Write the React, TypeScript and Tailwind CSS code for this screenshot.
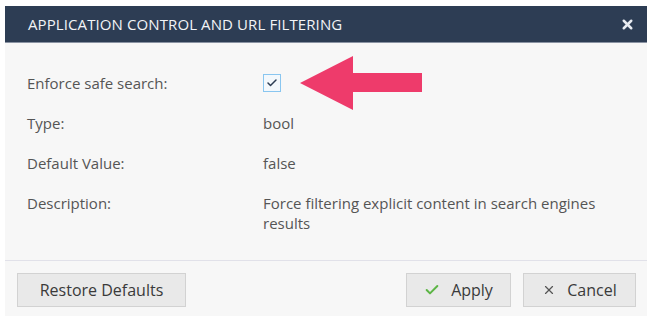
import { Check, X } from 'lucide-react';

const rows = [
  { label: 'Type:', value: 'bool' },
  { label: 'Default Value:', value: 'false' },
  { label: 'Description:', value: 'Force filtering explicit content in search engines results' },
];

function Arrow() {
  return (
    <svg width="124" height="56" viewBox="0 0 124 56" className="absolute left-[37px] top-[-18px]">
      <polygon points="0,27 53,0 53,17 122,17 122,36 53,36 53,54" fill="#ee3b6b" />
    </svg>
  );
}

export default function App() {
  return (
    <div className="w-[660px] h-[316px] bg-white pl-[5px] pt-[6px] font-['Open_Sans',sans-serif]">
      <div className="w-[642px] h-[310px] bg-[#f7f7f7] flex flex-col">
        <div className="h-[37px] bg-[#2d3d54] border-b border-[#8a93a3] flex items-center justify-between pl-[23px] pr-[12px]">
          <span className="text-[15px] text-[#f2f4f7] tracking-[0.1px]">APPLICATION CONTROL AND URL FILTERING</span>
          <X className="w-[15px] h-[15px] text-[#e8ebf0]" strokeWidth={4} />
        </div>

        <div className="flex-1 pl-[22px] pt-[30px] text-[15px] text-[#555]">
          <div className="flex items-center h-[20px]">
            <span className="w-[236px]">Enforce safe search:</span>
            <div className="relative">
              <div className="w-[18px] h-[18px] border border-[#89c6f0] bg-[#f3f8fc] flex items-center justify-center">
                <Check className="w-[12px] h-[12px] text-[#2d3d54]" strokeWidth={3} />
              </div>
              <Arrow />
            </div>
          </div>
          {rows.map((r) => (
            <div key={r.label} className="flex mt-[20px] leading-[20px]">
              <span className="w-[236px] shrink-0">{r.label}</span>
              <span className="w-[350px] shrink-0">{r.value}</span>
            </div>
          ))}
        </div>

        <div className="h-[56px] border-t border-[#e1e1e9] flex items-start pt-[12px] pl-[12px] pr-[11px]">
          <button className="h-[34px] w-[169px] bg-[#e9e9e9] border border-[#d2d2d2] text-[16px] text-[#3a3a3a]">
            Restore Defaults
          </button>
          <div className="flex-1" />
          <button className="h-[34px] w-[105px] bg-[#e9e9e9] border border-[#d2d2d2] text-[16px] text-[#3a3a3a] flex items-center justify-center gap-[11px]">
            <Check className="w-[16px] h-[16px] text-[#5cb545]" strokeWidth={3} />
            Apply
          </button>
          <button className="ml-[12px] h-[34px] w-[113px] bg-[#e9e9e9] border border-[#d2d2d2] text-[16px] text-[#3a3a3a] flex items-center justify-center gap-[11px]">
            <X className="w-[14px] h-[14px] text-[#555]" strokeWidth={2} />
            Cancel
          </button>
        </div>
      </div>
    </div>
  );
}
